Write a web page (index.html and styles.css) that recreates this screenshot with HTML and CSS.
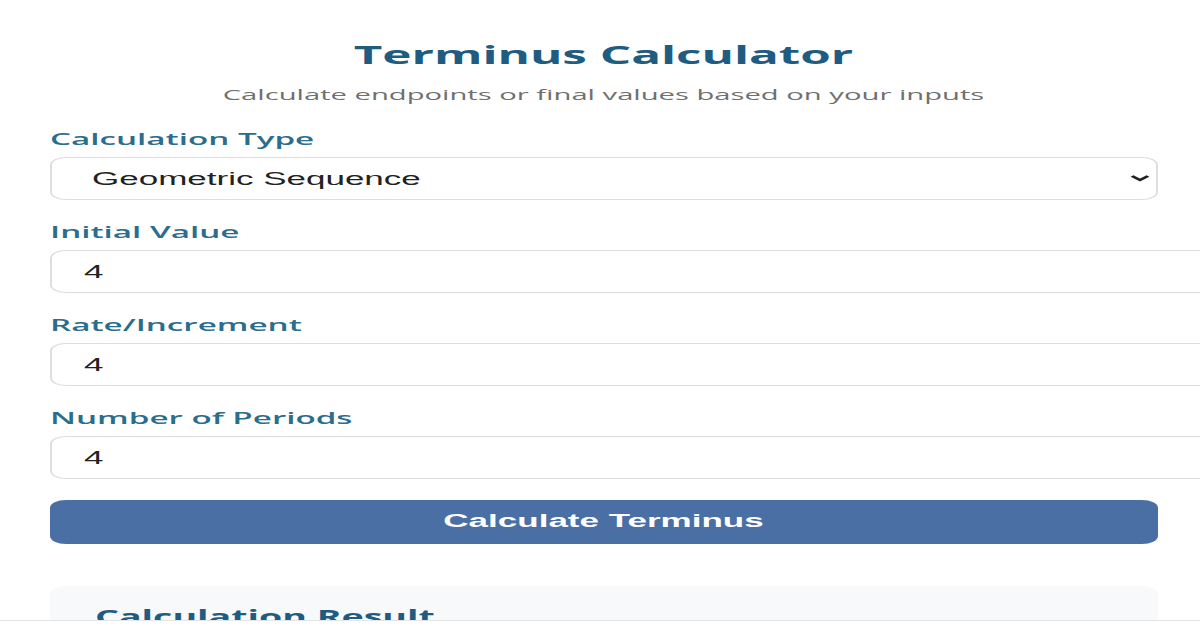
FILE: index.html
```html
<!DOCTYPE html>
<html lang="en">
<head>
<meta charset="utf-8">
<title>Terminus Calculator</title>
<link rel="stylesheet" href="styles.css">
</head>
<body>
<div class="page">
  <div class="container">
    <h1 class="title">Terminus Calculator</h1>
    <p class="subtitle">Calculate endpoints or final values based on your inputs</p>

    <div class="form-group">
      <label class="label" for="type">Calculation Type</label>
      <select class="select" id="type">
        <option>Geometric Sequence</option>
        <option>Arithmetic Sequence</option>
      </select>
    </div>

    <div class="form-group">
      <label class="label" for="initial">Initial Value</label>
      <input class="input" id="initial" type="text" value="4">
    </div>

    <div class="form-group">
      <label class="label" for="rate">Rate/Increment</label>
      <input class="input" id="rate" type="text" value="4">
    </div>

    <div class="form-group">
      <label class="label" for="periods">Number of Periods</label>
      <input class="input" id="periods" type="text" value="4">
    </div>

    <button class="button" type="button">Calculate Terminus</button>

    <div class="result">
      <h2 class="result-title">Calculation Result</h2>
    </div>
  </div>
</div>
<div class="bottom-bar"></div>
</body>
</html>
```

FILE: styles.css
```css
html, body {
  margin: 0;
  padding: 0;
  overflow: hidden;
  background: #ffffff;
  height: 628px;
}

.page {
  width: 600px;
  transform: scaleX(2);
  transform-origin: 0 0;
}

.container {
  width: 553.5px;
  margin-left: 25px;
  padding-top: 40px;
}

.title {
  margin: 0;
  font-family: "Open Sans", sans-serif;
  font-weight: 700;
  font-size: 24.7px;
  line-height: 30px;
  color: #1f5c82;
  text-align: center;
}

.subtitle {
  margin: 14px 0 0;
  font-family: "Open Sans", sans-serif;
  font-size: 14.6px;
  line-height: 20px;
  color: #707070;
  text-align: center;
}

.form-group {
  margin-top: 24px;
}

.form-group + .form-group {
  margin-top: 21px;
}

.label {
  display: block;
  font-family: "Open Sans", sans-serif;
  font-weight: 600;
  font-size: 16.6px;
  line-height: 22px;
  color: #2b6d8d;
  margin-bottom: 7px;
}

.select,
.input {
  display: block;
  font-family: "Liberation Sans", Arial, sans-serif;
  font-size: 17.5px;
  line-height: 20px;
  color: #222222;
  background: #ffffff;
  border: 1px solid #dedede;
  border-radius: 8px;
  margin: 0;
}

.select {
  width: 100%;
  height: 43px;
  padding: 0 16px;
}

.input {
  width: 100%;
  padding: 10.5px 16px;
  box-sizing: content-box;
}

.button {
  display: block;
  width: 100%;
  height: 44px;
  margin-top: 21px;
  padding: 0 0 2px;
  border: none;
  border-radius: 8px;
  background: #4a6fa5;
  color: #ffffff;
  font-family: "Liberation Sans", Arial, sans-serif;
  font-weight: 700;
  font-size: 17.5px;
}

.result {
  margin-top: 42px;
  background: #f8f9fa;
  border-radius: 8px;
  padding: 18px 22.5px 20px;
}

.result-title {
  margin: 0;
  font-family: "Open Sans", sans-serif;
  font-weight: 700;
  font-size: 18.8px;
  line-height: 26px;
  color: #1f5c82;
}

.bottom-bar {
  position: fixed;
  left: 0;
  right: 0;
  bottom: 0;
  height: 7px;
  background: #ffffff;
  border-top: 1px solid #e4e4e4;
}
```
